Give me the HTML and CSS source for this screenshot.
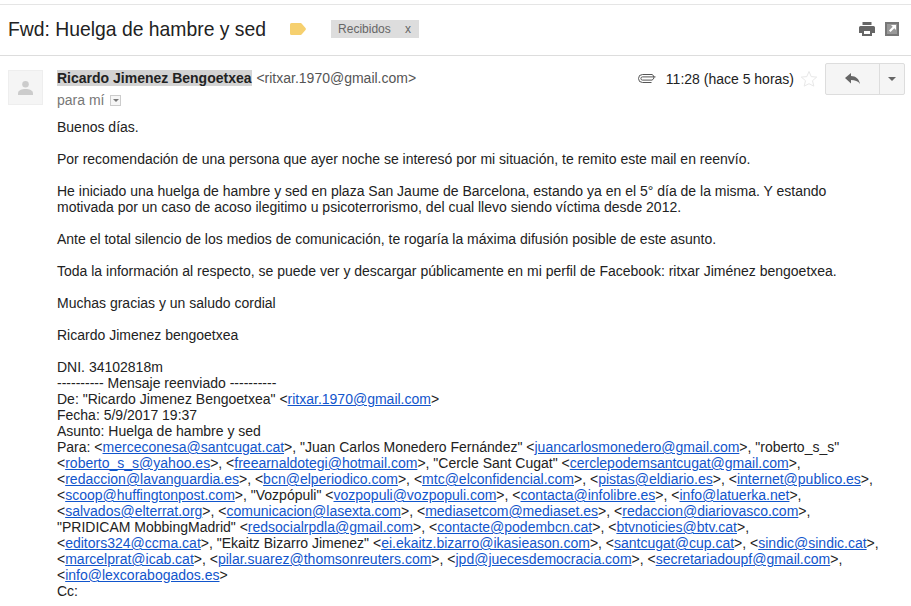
FILE: index.html
```html
<!DOCTYPE html>
<html lang="es">
<head>
  <meta charset="UTF-8" />
  <title>Fwd: Huelga de hambre y sed</title>
  <link rel="stylesheet" href="styles.css">
</head>
<body>
  <div class="subject">
    <h1 class="subject-title">Fwd: Huelga de hambre y sed</h1>
    <svg class="label-tag" width="16" height="12" viewBox="0 0 16 12"><path d="M1.500 0h8.500c1 0 1.500.3 2 1l3.500 4c.5.600.5 1.400 0 2l-3.500 4c-.5.700-1 1-2 1H1.500A1.500 1.500 0 0 1 0 10.500v-9A1.500 1.500 0 0 1 1.500 0z" fill="#f6d06f"/></svg>
    <span class="chip">Recibidos <span class="chip-x">x</span></span>
    <div class="subject-tools">
      <svg width="16" height="14" viewBox="0 0 16 14"><path d="M3.500 0h9v3h-9zM1.500 4h13A1.500 1.500 0 0 1 16 5.500V11h-3v3H3v-3H0V5.500A1.500 1.500 0 0 1 1.500 4zM5 9v3h6V9z" fill="#666"/></svg>
      <svg width="14" height="14" viewBox="0 0 14 14"><path d="M0 0h14v14H0zM2 2v10h10V2z" fill="#777"/><path d="M2 2h10v10H2z" fill="#999"/><path d="M6 3h5v5L9.300 6.300 5.500 10 4 8.500l3.700-3.800z" fill="#fff"/></svg>
    </div>
  </div>

  <div class="message">
    <div class="avatar">
      <svg width="15" height="15" viewBox="0 0 16 16"><circle cx="8" cy="4.500" r="3.500" fill="#ccc"/><path d="M0 16v-2c0-3 4-4.500 8-4.500s8 1.500 8 4.500v2z" fill="#ccc"/></svg>
    </div>
    <div class="message-main">
      <div class="message-head">
        <div class="sender">
          <div><strong class="sender-name">Ricardo Jimenez Bengoetxea</strong> <span class="sender-mail">&lt;ritxar.1970@gmail.com&gt;</span></div>
          <div class="to">para mí <span class="to-arrow"></span></div>
        </div>
        <div class="meta">
          <svg class="clip" width="18" height="9" viewBox="0 0 18 9"><path d="M17.500 2.900H4.500a1.600 1.600 0 0 0 0 3.200h9.500a3 3 0 0 0 0-5.600H4.500a4 4 0 0 0 0 8h9" fill="none" stroke="#555" stroke-width="1"/></svg>
          <span class="time">11:28 (hace 5 horas)</span>
          <svg class="star" width="18" height="18" viewBox="0 0 18 18"><path d="M9 1.500l2.200 5.100 5.500.5-4.200 3.600 1.300 5.400L9 13.700l-4.800 2.400 1.300-5.400L1.300 7.100l5.500-.5z" fill="none" stroke="#e8e8e8"/></svg>
          <div class="reply-group">
            <button class="reply-btn"><svg width="15" height="12" viewBox="0 0 15 12"><path d="M6 0v3c5 0 8 3 9 8-2-3-5-4-9-4v3.500L0 5z" fill="#666"/></svg></button>
            <button class="reply-more"><span class="caret"></span></button>
          </div>
        </div>
      </div>

      <div class="body">
        <p>Buenos días.</p>
        <p>Por recomendación de una persona que ayer noche se interesó por mi situación, te remito este mail en reenvío.</p>
        <p>He iniciado una huelga de hambre y sed en plaza San Jaume de Barcelona, estando ya en el 5° día de la misma. Y estando<br>motivada por un caso de acoso ilegitimo u psicoterrorismo, del cual llevo siendo víctima desde 2012.</p>
        <p>Ante el total silencio de los medios de comunicación, te rogaría la máxima difusión posible de este asunto.</p>
        <p>Toda la información al respecto, se puede ver y descargar públicamente en mi perfil de Facebook: ritxar Jiménez bengoetxea.</p>
        <p>Muchas gracias y un saludo cordial</p>
        <p>Ricardo Jimenez bengoetxea</p>
        <p>DNI. 34102818m<br>
        ---------- Mensaje reenviado ----------<br>
        De: "Ricardo Jimenez Bengoetxea" &lt;<a href="#">ritxar.1970@gmail.com</a>&gt;<br>
        Fecha: 5/9/2017 19:37<br>
        Asunto: Huelga de hambre y sed<br>
        Para: &lt;<a href="#">merceconesa@santcugat.cat</a>&gt;, "Juan Carlos Monedero Fernández" &lt;<a href="#">juancarlosmonedero@gmail.com</a>&gt;, "roberto_s_s"<br>
        &lt;<a href="#">roberto_s_s@yahoo.es</a>&gt;, &lt;<a href="#">freearnaldotegi@hotmail.com</a>&gt;, "Cercle Sant Cugat" &lt;<a href="#">cerclepodemsantcugat@gmail.com</a>&gt;,<br>
        &lt;<a href="#">redaccion@lavanguardia.es</a>&gt;, &lt;<a href="#">bcn@elperiodico.com</a>&gt;, &lt;<a href="#">mtc@elconfidencial.com</a>&gt;, &lt;<a href="#">pistas@eldiario.es</a>&gt;, &lt;<a href="#">internet@publico.es</a>&gt;,<br>
        &lt;<a href="#">scoop@huffingtonpost.com</a>&gt;, "Vozpópuli" &lt;<a href="#">vozpopuli@vozpopuli.com</a>&gt;, &lt;<a href="#">contacta@infolibre.es</a>&gt;, &lt;<a href="#">info@latuerka.net</a>&gt;,<br>
        &lt;<a href="#">salvados@elterrat.org</a>&gt;, &lt;<a href="#">comunicacion@lasexta.com</a>&gt;, &lt;<a href="#">mediasetcom@mediaset.es</a>&gt;, &lt;<a href="#">redaccion@diariovasco.com</a>&gt;,<br>
        "PRIDICAM MobbingMadrid" &lt;<a href="#">redsocialrpdla@gmail.com</a>&gt;, &lt;<a href="#">contacte@podembcn.cat</a>&gt;, &lt;<a href="#">btvnoticies@btv.cat</a>&gt;,<br>
        &lt;<a href="#">editors324@ccma.cat</a>&gt;, "Ekaitz Bizarro Jimenez" &lt;<a href="#">ei.ekaitz.bizarro@ikasieason.com</a>&gt;, &lt;<a href="#">santcugat@cup.cat</a>&gt;, &lt;<a href="#">sindic@sindic.cat</a>&gt;,<br>
        &lt;<a href="#">marcelprat@icab.cat</a>&gt;, &lt;<a href="#">pilar.suarez@thomsonreuters.com</a>&gt;, &lt;<a href="#">jpd@juecesdemocracia.com</a>&gt;, &lt;<a href="#">secretariadoupf@gmail.com</a>&gt;,<br>
        &lt;<a href="#">info@lexcorabogados.es</a>&gt;<br>
        Cc:</p>
      </div>
    </div>
  </div>
</body>
</html>
```

FILE: styles.css
```css
* {
  box-sizing: border-box;
}
html, body {
  height: 100%;
}
body {
  margin: 0;
  padding-top: 4px;
  background: #fff;
  color: #222;
  font-family: "Liberation Sans", Arial, sans-serif;
  font-size: 14px;
  overflow: hidden;
}
.subject {
  display: flex;
  align-items: center;
  height: 52px;
  padding: 0 12px 2px 8px;
  border-top: 1px solid #e5e5e5;
  border-bottom: 1px solid #ddd;
}
.subject-title {
  margin: 0;
  font-size: 19.350px;
  font-weight: normal;
}
.label-tag {
  margin-left: 24px;
}
.chip {
  margin-left: 25px;
  padding: 0 7px;
  width: 88px;
  height: 18px;
  line-height: 18px;
  background: #ddd;
  color: #666;
  font-size: 12px;
  white-space: nowrap;
}
.chip-x {
  margin-left: 11px;
}
.subject-tools {
  margin-left: auto;
  display: flex;
  align-items: center;
  gap: 10px;
}
.message {
  display: flex;
  padding: 14px 0 0 8px;
}
.avatar {
  flex: none;
  display: flex;
  align-items: center;
  justify-content: center;
  width: 35px;
  height: 35px;
  background: #f5f5f5;
  border: 1px solid #eee;
}
.message-main {
  flex: 1;
  padding-left: 14px;
  padding-right: 6px;
}
.message-head {
  display: flex;
  justify-content: space-between;
  height: 49px;
}
.sender {
  color: #555;
  line-height: 16px;
}
.sender-name {
  background: #d3d3d3;
  color: #222;
}
.sender-mail {
  margin-left: 1px;
}
.to {
  margin-top: 6px;
  color: #777;
  display: flex;
  align-items: center;
  gap: 6px;
}
.to-arrow {
  position: relative;
  width: 11px;
  height: 11px;
  border: 1px solid #ccc;
  background: #f6f6f6;
}
.to-arrow::after {
  content: "";
  position: absolute;
  left: 2px;
  top: 3px;
  border: 3px solid transparent;
  border-top: 3px solid #777;
}
.meta {
  display: flex;
  align-items: flex-start;
}
.clip {
  margin-top: 4px;
}
.time {
  margin-left: 10px;
  line-height: 18px;
}
.star {
  margin-left: 6px;
}
.reply-group {
  display: flex;
  margin-left: 7px;
  margin-top: -7px;
  height: 32px;
  border: 1px solid #ddd;
  border-radius: 2px;
  background: #f5f5f5;
}
.reply-group button {
  display: flex;
  align-items: center;
  justify-content: center;
  padding: 0;
  border: 0;
  background: transparent;
}
.reply-group .reply-btn {
  width: 54px;
  border-right: 1px solid #ddd;
}
.reply-more {
  width: 24px;
}
.caret {
  border: 4px solid transparent;
  border-top: 4px solid #666;
  border-bottom: 0;
}
.body {
  line-height: 16px;
  color: #222;
}
.body p {
  margin: 0 0 16px;
  white-space: nowrap;
}
.body a {
  color: #15c;
}
```
